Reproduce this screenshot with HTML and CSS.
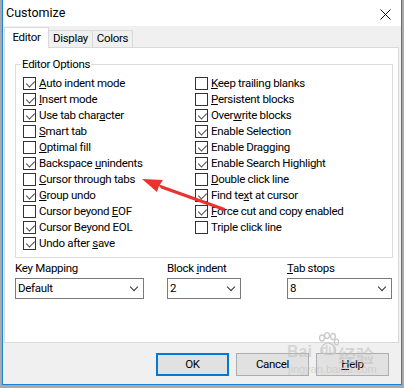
FILE: index.html
```html
<!DOCTYPE html>
<html>
<head>
<meta charset="utf-8">
<link rel="stylesheet" href="styles.css">
</head>
<body>
<div class="window">
  <div class="titlebar">
    <span class="title">Customize</span>
    <svg class="close" width="11" height="11" viewBox="0 0 11 11"><path d="M0.5 0.5 L10.5 10.5 M10.5 0.5 L0.5 10.5" stroke="#111" stroke-width="1" fill="none"/></svg>
  </div>
  <div class="tabs">
    <div class="tab active">Editor</div>
    <div class="tab t-display">Display</div>
    <div class="tab t-colors">Colors</div>
  </div>
  <div class="panel">
    <div class="group">
      <div class="legend">Editor Options</div>
      <div class="checks">
        <div class="col">
          <div class="row"><span class="box on"></span><span><u>A</u>uto indent mode</span></div>
          <div class="row"><span class="box on"></span><span><u>I</u>nsert mode</span></div>
          <div class="row"><span class="box on"></span><span>Use tab char<u>a</u>cter</span></div>
          <div class="row"><span class="box"></span><span><u>S</u>mart tab</span></div>
          <div class="row"><span class="box"></span><span><u>O</u>ptimal fill</span></div>
          <div class="row"><span class="box on"></span><span>Backspace <u>u</u>nindents</span></div>
          <div class="row"><span class="box"></span><span><u>C</u>ursor through tabs</span></div>
          <div class="row"><span class="box on"></span><span><u>G</u>roup undo</span></div>
          <div class="row"><span class="box"></span><span>Cursor beyond <u>E</u>OF</span></div>
          <div class="row"><span class="box on"></span><span>Cursor Beyond EOL</span></div>
          <div class="row"><span class="box on"></span><span>Undo after <u>s</u>ave</span></div>
        </div>
        <div class="col">
          <div class="row"><span class="box"></span><span><u>K</u>eep trailing blanks</span></div>
          <div class="row"><span class="box"></span><span><u>P</u>ersistent blocks</span></div>
          <div class="row"><span class="box on"></span><span>Over<u>w</u>rite blocks</span></div>
          <div class="row"><span class="box on"></span><span>Enable Selection</span></div>
          <div class="row"><span class="box on"></span><span>Enable Dragging</span></div>
          <div class="row"><span class="box on"></span><span>Enable Search Highlight</span></div>
          <div class="row"><span class="box"></span><span><u>D</u>ouble click line</span></div>
          <div class="row"><span class="box on"></span><span>Find te<u>x</u>t at cursor</span></div>
          <div class="row"><span class="box on"></span><span><u>F</u>orce cut and copy enabled</span></div>
          <div class="row"><span class="box"></span><span>Triple click line</span></div>
        </div>
      </div>
    </div>
    <div class="fields">
      <div class="field f-key">
        <div class="label">Key Mapping</div>
        <div class="select"><span>Default</span><span class="chev"></span></div>
      </div>
      <div class="field f-block">
        <div class="label">Block <u>i</u>ndent</div>
        <div class="select"><span>2</span><span class="chev"></span></div>
      </div>
      <div class="field f-tab">
        <div class="label"><u>T</u>ab stops</div>
        <div class="select"><span>8</span><span class="chev"></span></div>
      </div>
    </div>
  </div>
  <div class="buttons">
    <div class="btn default">OK</div>
    <div class="btn">Cancel</div>
    <div class="btn"><u>H</u>elp</div>
  </div>
</div>

<svg class="arrow" width="404" height="388" viewBox="0 0 404 388">
  <polygon points="142,179 163,180 159,186 157,192" fill="#e8332f"/>
  <polygon points="158,184 161,188.5 224,211 225,208" fill="#e8332f"/>
</svg>

<div class="watermark">
  <span class="wm-bai">Bai</span>
  <svg class="paw" width="22" height="24" viewBox="0 0 22 24">
    <ellipse cx="5" cy="6" rx="2.4" ry="3" fill="none" stroke="#c9c9c9" stroke-width="1.3"/>
    <ellipse cx="10" cy="3.5" rx="2.4" ry="3" fill="none" stroke="#c9c9c9" stroke-width="1.3"/>
    <ellipse cx="16" cy="4.5" rx="2.4" ry="3" fill="none" stroke="#c9c9c9" stroke-width="1.3"/>
    <ellipse cx="19.5" cy="10" rx="2.2" ry="2.8" fill="none" stroke="#c9c9c9" stroke-width="1.3"/>
    <path d="M4 20 C3 14 9 10 12 11 C16 12 20 16 18 21 C16 23 6 23 4 20 Z" fill="none" stroke="#c9c9c9" stroke-width="1.3"/>
  </svg>
  <span class="wm-du">du</span>
  <span class="wm-cn">经验</span>
  <span class="wm-url">jingyan.baidu.com</span>
</div>
</body>
</html>
```

FILE: styles.css
```css
html, body {
  margin: 0;
  padding: 0;
}
body {
  width: 404px;
  height: 388px;
  background: #a9a9a9;
  font-family: Roboto, "Noto Sans", "Liberation Sans", sans-serif;
  font-size: 11.5px;
  letter-spacing: -0.3px;
  color: #000;
  position: relative;
  overflow: hidden;
}
u {
  text-decoration: underline;
  text-underline-offset: 1px;
}
.window {
  margin-left: 2px;
  width: 400px;
  height: 385px;
  box-sizing: border-box;
  border: 1px solid #1883d7;
  border-top: 0;
  background: #f0f0f0;
  display: flex;
  flex-direction: column;
}
.titlebar {
  height: 26px;
  background: #fff;
  display: flex;
  align-items: center;
  padding-left: 3px;
  flex-shrink: 0;
}
.title {
  font-size: 12.5px;
  letter-spacing: 0;
  line-height: 26px;
  padding-top: 0;
}
.close {
  margin-left: auto;
  margin-right: 10px;
  margin-top: 2px;
}
.tabs {
  height: 21px;
  display: flex;
  align-items: flex-end;
  padding-left: 1px;
  flex-shrink: 0;
}
.tab {
  box-sizing: border-box;
  border: 1px solid #d9d9d9;
  border-bottom: 0;
  background: #f0f0f0;
  height: 17px;
  line-height: 15px;
  text-align: center;
}
.tab.active {
  width: 45px;
  height: 21px;
  line-height: 18px;
  background: #fff;
  margin-bottom: -1px;
  position: relative;
  z-index: 1;
}
.t-display {
  width: 45px;
  margin-left: -1px;
}
.t-colors {
  width: 41px;
  margin-left: -1px;
}
.panel {
  margin: 0 2px 0 1px;
  height: 296px;
  box-sizing: border-box;
  border: 1px solid #d9d9d9;
  background: #fff;
  flex-shrink: 0;
}
.group {
  margin: 16px 5px 0 10px;
  height: 194px;
  box-sizing: border-box;
  border: 1px solid #dcdcdc;
}
.legend {
  margin: -9px 0 0 5px;
  padding: 0 1px;
  width: fit-content;
  background: #fff;
  line-height: 16px;
}
.checks {
  margin-top: 3px;
  padding-left: 7px;
  display: grid;
  grid-template-columns: 172px 1fr;
}
.row {
  height: 16px;
  line-height: 16px;
  display: flex;
  align-items: flex-start;
  white-space: nowrap;
}
.box {
  width: 13px;
  height: 13px;
  box-sizing: border-box;
  border: 1px solid #333;
  background: #fff;
  margin-top: 2px;
  margin-right: 3px;
  flex-shrink: 0;
  position: relative;
}
.box.on::after {
  content: "";
  position: absolute;
  left: 2px;
  top: 0px;
  width: 7px;
  height: 4px;
  border-left: 1px solid #444;
  border-bottom: 1px solid #444;
  transform: translate(0.5px, 2.5px) rotate(-45deg);
  transform-origin: center;
}
.fields {
  margin: 2px 0 0 10px;
  display: flex;
}
.field .label {
  line-height: 16px;
  margin-bottom: 2px;
  white-space: nowrap;
}
.f-key { width: 129px; }
.f-block { width: 74px; margin-left: 23px; }
.f-tab { width: 105px; margin-left: 46px; }
.select {
  height: 21px;
  box-sizing: border-box;
  border: 1px solid #7a7a7a;
  background: #fff;
  padding-left: 2px;
  line-height: 19px;
  display: flex;
  align-items: center;
  justify-content: space-between;
  padding-right: 6px;
}
.chev {
  width: 5px;
  height: 5px;
  border-right: 1px solid #333;
  border-bottom: 1px solid #333;
  transform: rotate(45deg);
  margin-top: -3px;
}
.buttons {
  margin-top: 10px;
  display: flex;
  justify-content: flex-end;
  gap: 7px;
  padding-right: 12px;
}
.btn {
  width: 73px;
  height: 23px;
  box-sizing: border-box;
  border: 1px solid #adadad;
  background: #e1e1e1;
  text-align: center;
  line-height: 21px;
}
.btn.default {
  border: 2px solid #0078d7;
  line-height: 19px;
}
.arrow {
  position: absolute;
  left: 0;
  top: 0;
  pointer-events: none;
}
.watermark {
  position: absolute;
  left: 286px;
  top: 331px;
  width: 95px;
  height: 46px;
  color: rgba(190, 190, 190, 0.55);
  letter-spacing: 0;
  pointer-events: none;
}
.wm-bai {
  position: absolute;
  left: 1px;
  top: 12px;
  font-size: 16px;
  font-weight: bold;
  font-family: "Liberation Sans", sans-serif;
}
.paw {
  position: absolute;
  left: 31px;
  top: 1px;
}
.wm-du {
  position: absolute;
  left: 35px;
  top: 12px;
  font-size: 12px;
  font-weight: bold;
  font-family: "Liberation Sans", sans-serif;
}
.wm-cn {
  position: absolute;
  left: 52px;
  top: 11px;
  font-size: 18px;
  font-weight: bold;
  font-family: "Noto Sans CJK SC", sans-serif;
}
.wm-url {
  position: absolute;
  left: 2px;
  top: 32px;
  font-size: 11px;
  font-family: "Liberation Sans", sans-serif;
}
```
